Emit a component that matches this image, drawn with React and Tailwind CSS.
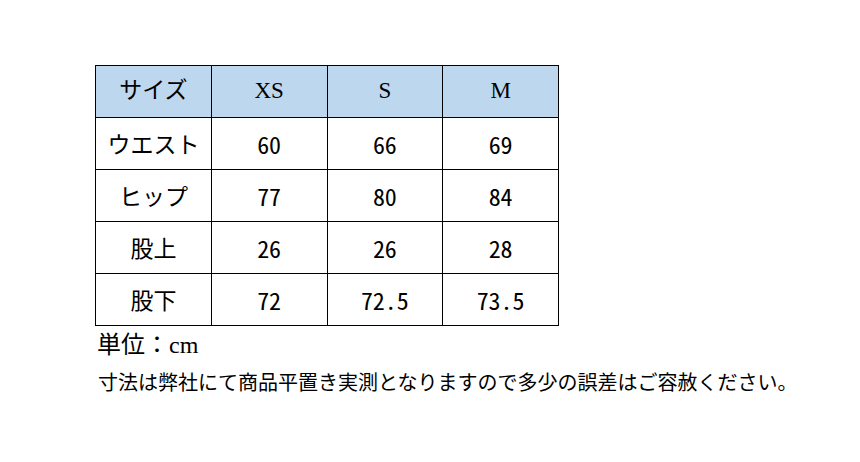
const rows = [
  ["ウエスト", "60", "66", "69"],
  ["ヒップ", "77", "80", "84"],
  ["股上", "26", "26", "28"],
  ["股下", "72", "72.5", "73.5"],
];

const serif = "font-['Liberation_Serif','Noto_Sans_CJK_JP',serif]";
const mono = "font-['Noto_Sans_Mono_CJK_JP','Noto_Sans_CJK_JP',monospace]";

export default function App() {
  return (
    <div className="h-[462px] w-[860px] bg-white pl-[95px] pt-[65px] text-black">
      <table className="w-[464px] table-fixed border-collapse">
        <thead>
          <tr className="h-[52px] bg-[#bdd7ee]">
            {["サイズ", "XS", "S", "M"].map((h) => (
              <th
                key={h}
                className={`border border-black text-center text-[23px] font-normal ${serif}`}
              >
                {h}
              </th>
            ))}
          </tr>
        </thead>
        <tbody>
          {rows.map((r) => (
            <tr key={r[0]} className="h-[52px]">
              <td className="border border-black text-center text-[23px] font-['Noto_Sans_CJK_JP',sans-serif]">
                {r[0]}
              </td>
              {r.slice(1).map((v, i) => (
                <td key={i} className={`border border-black text-center text-[24px] ${mono}`}>
                  {v}
                </td>
              ))}
            </tr>
          ))}
        </tbody>
      </table>
      <p className={`mt-[3px] pl-[2px] text-[24px] leading-[32px] ${serif}`}>単位：cm</p>
      <p className="mt-[8px] pl-[3px] text-[20px] leading-[26px] font-['Noto_Sans_CJK_JP',sans-serif]">
        寸法は弊社にて商品平置き実測となりますので多少の誤差はご容赦ください。
      </p>
    </div>
  );
}
